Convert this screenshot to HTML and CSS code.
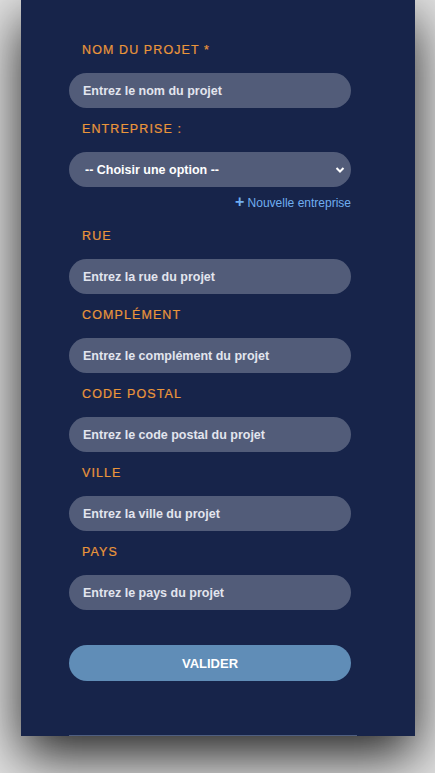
FILE: index.html
```html
<!DOCTYPE html>
<html lang="fr">
<head>
    <meta charset="UTF-8">
    <title>Nouveau projet</title>
    <meta name="viewport" content="width=device-width,initial-scale=1">
    <link rel="stylesheet" href="styles.css">
</head>
<body>
    <div class="card">
        <form class="project-form">
            <label class="field-label" for="nom">Nom du projet *</label>
            <input type="text" id="nom" class="field-input" placeholder="Entrez le nom du projet">

            <label class="field-label" for="entreprise">Entreprise :</label>
            <select id="entreprise" class="field-input field-select">
                <option>-- Choisir une option --</option>
            </select>
            <div class="new-link"><a href="#"><span class="plus">+</span> Nouvelle entreprise</a></div>

            <label class="field-label" for="rue">Rue</label>
            <input type="text" id="rue" class="field-input" placeholder="Entrez la rue du projet">

            <label class="field-label" for="complement">Complément</label>
            <input type="text" id="complement" class="field-input" placeholder="Entrez le complément du projet">

            <label class="field-label" for="cp">Code postal</label>
            <input type="text" id="cp" class="field-input" placeholder="Entrez le code postal du projet">

            <label class="field-label" for="ville">Ville</label>
            <input type="text" id="ville" class="field-input" placeholder="Entrez la ville du projet">

            <label class="field-label" for="pays">Pays</label>
            <input type="text" id="pays" class="field-input" placeholder="Entrez le pays du projet">

            <button type="submit" class="submit-btn">Valider</button>
            <div class="separator"></div>
        </form>
    </div>
</body>
</html>
```

FILE: styles.css
```css
* {
    margin: 0;
    padding: 0;
    box-sizing: border-box;
}

body {
    font-family: 'Liberation Sans', Arial, sans-serif;
    background: #e2e2e2;
    min-height: 100vh;
    padding: 0 20px 0 21px;
}

.card {
    background: #17244a;
    padding: 29px 58px 0 48px;
    box-shadow: 0 20px 50px rgba(0,0,0,0.85);
}

.project-form {
    display: flex;
    flex-direction: column;
    width: 288px;
}

.field-label {
    display: block;
    margin: 13px 0 15px;
    padding-left: 13px;
    line-height: 16px;
    font-size: 12.5px;
    letter-spacing: 1.1px;
    text-transform: uppercase;
    color: #ea963b;
    -webkit-text-stroke: 0.2px #ea963b;
}

.field-input {
    width: 282px;
    height: 35px;
    padding: 0 14px;
    border: none;
    border-radius: 18px;
    background: #525c79;
    color: #fff;
    font-family: inherit;
    font-size: 12.5px;
    font-weight: bold;
    outline: none;
}

.field-input::placeholder {
    color: #e2e5ee;
}

.field-select {
    appearance: none;
    -webkit-appearance: none;
    padding-left: 16px;
    background: #525c79 url("data:image/svg+xml;utf8,<svg xmlns='http://www.w3.org/2000/svg' width='10' height='8' viewBox='0 0 10 8'><path d='M1.5 2 L5 5.5 L8.5 2' fill='none' stroke='white' stroke-width='2'/></svg>") no-repeat right 6px center;
}

.new-link {
    width: 282px;
    margin: 7px 0 4px;
    line-height: 16px;
    text-align: right;
}

.new-link a {
    color: #70aef0;
    font-size: 12px;
    text-decoration: none;
}

.plus {
    font-size: 16px;
    font-weight: bold;
}

.submit-btn {
    width: 282px;
    height: 36px;
    margin-top: 35px;
    border: none;
    border-radius: 18px;
    background: #608db7;
    color: #fff;
    font-family: inherit;
    font-size: 13px;
    font-weight: bold;
    text-transform: uppercase;
    cursor: pointer;
}

.separator {
    margin-top: 54px;
    border-top: 1px solid #4f5e80;
}
```
